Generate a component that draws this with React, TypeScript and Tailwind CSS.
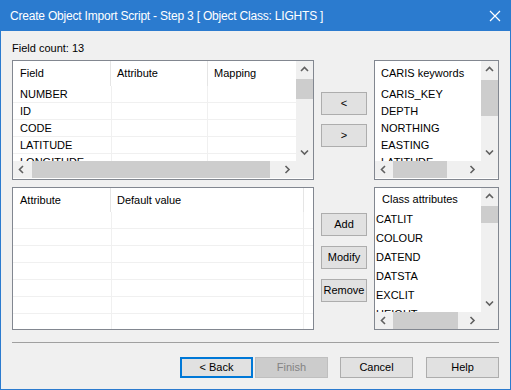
import { ReactNode } from 'react'

const font = { fontFamily: '"Liberation Sans", Arial, sans-serif' }

type Dir = 'up' | 'down' | 'left' | 'right'

const Chevron = ({ dir }: { dir: Dir }) => {
  const pts: Record<Dir, string> = {
    up: '1,5 4.5,1.5 8,5',
    down: '1,1.5 4.5,5 8,1.5',
    left: '5,1 1.5,4.5 5,8',
    right: '1.5,1 5,4.5 1.5,8',
  }
  const vertical = dir === 'up' || dir === 'down'
  return (
    <svg
      width={vertical ? 9 : 7}
      height={vertical ? 7 : 9}
      viewBox={vertical ? '0 0 9 7' : '0 0 7 9'}
    >
      <polyline points={pts[dir]} fill="none" stroke="#606060" strokeWidth="1.6" />
    </svg>
  )
}

const VScroll = ({ thumbTop, thumbH }: { thumbTop: number; thumbH: number }) => (
  <div className="flex w-[17px] shrink-0 flex-col bg-[#f0f0f0]">
    <div className="flex h-[17px] items-center justify-center">
      <Chevron dir="up" />
    </div>
    <div className="flex-1">
      <div className="bg-[#cdcdcd]" style={{ marginTop: thumbTop, height: thumbH }} />
    </div>
    <div className="flex h-[17px] items-center justify-center">
      <Chevron dir="down" />
    </div>
  </div>
)

const HScroll = ({ thumbLeft, thumbW }: { thumbLeft: number; thumbW: number }) => (
  <div className="flex h-[17px] shrink-0">
    <div className="flex flex-1 bg-[#f0f0f0]">
      <div className="flex w-[17px] items-center justify-center">
        <Chevron dir="left" />
      </div>
      <div className="flex-1">
        <div className="h-full bg-[#cdcdcd]" style={{ marginLeft: thumbLeft, width: thumbW }} />
      </div>
      <div className="flex w-[17px] items-center justify-center">
        <Chevron dir="right" />
      </div>
    </div>
    <div className="w-[17px] bg-[#f0f0f0]" />
  </div>
)

const SideButton = ({ children }: { children: ReactNode }) => (
  <button className="flex h-[23px] w-[46px] items-center justify-center border border-[#adadad] bg-[#e1e1e1] text-[11px] text-black">
    {children}
  </button>
)

const fields = ['NUMBER', 'ID', 'CODE', 'LATITUDE', 'LONGITUDE']
const keywords = ['CARIS_KEY', 'DEPTH', 'NORTHING', 'EASTING', 'LATITUDE']
const classAttrs = ['CATLIT', 'COLOUR', 'DATEND', 'DATSTA', 'EXCLIT', 'HEIGHT']

const FieldList = () => (
  <div className="flex h-[120px] w-[302px] flex-col border border-[#828790] bg-white">
    <div className="flex h-[100px]">
      <div className="flex-1 overflow-hidden">
        <div className="flex h-[25px] items-center">
          <div className="flex h-full w-[98px] items-center border-r border-[#e5e5e5] pl-[7px]">Field</div>
          <div className="flex h-full w-[97px] items-center border-r border-[#e5e5e5] pl-[6px]">Attribute</div>
          <div className="flex h-full flex-1 items-center pl-[6px]">Mapping</div>
        </div>
        {fields.map((f) => (
          <div key={f} className="flex h-[17px] border-b border-[#f0f0f0]">
            <div className="flex w-[98px] items-center pl-[7px]">{f}</div>
            <div className="w-[97px] border-x border-[#f0f0f0]" />
            <div className="flex-1" />
          </div>
        ))}
      </div>
      <VScroll thumbTop={1} thumbH={20} />
    </div>
    <HScroll thumbLeft={2} thumbW={238} />
  </div>
)

const DefaultsList = () => (
  <div className="flex h-[143px] w-[302px] flex-col overflow-hidden border border-[#828790] bg-white">
    <div className="flex h-[24px] shrink-0">
      <div className="flex h-full w-[98px] items-center border-r border-[#e5e5e5] pl-[7px]">Attribute</div>
      <div className="flex h-full w-[193px] items-center border-r border-[#e5e5e5] pl-[6px]">Default value</div>
    </div>
    {[0, 1, 2, 3, 4, 5, 6].map((i) => (
      <div key={i} className="flex h-[17px] shrink-0 border-b border-[#f0f0f0]">
        <div className="w-[98px]" />
        <div className="w-[193px] border-x border-[#f0f0f0]" />
      </div>
    ))}
  </div>
)

const KeywordList = () => (
  <div className="flex h-[120px] w-[125px] flex-col border border-[#828790] bg-white">
    <div className="flex h-[100px]">
      <div className="flex-1 overflow-hidden">
        <div className="flex h-[25px] items-center pl-[6px]">CARIS keywords</div>
        {keywords.map((k) => (
          <div key={k} className="flex h-[17px] items-center pl-[6px]">
            {k}
          </div>
        ))}
      </div>
      <VScroll thumbTop={2} thumbH={36} />
    </div>
    <HScroll thumbLeft={1} thumbW={54} />
  </div>
)

const ClassList = () => (
  <div className="flex h-[143px] w-[125px] flex-col border border-[#828790] bg-white">
    <div className="flex min-h-0 flex-1">
      <div className="flex-1 overflow-hidden">
        <div className="flex h-[22px] items-center pl-[7px]">Class attributes</div>
        {classAttrs.map((c) => (
          <div key={c} className="flex h-[19px] items-center pl-[1px]">
            {c}
          </div>
        ))}
      </div>
      <VScroll thumbTop={1} thumbH={17} />
    </div>
    <HScroll thumbLeft={1} thumbW={65} />
  </div>
)

export default function App() {
  return (
    <div
      className="flex h-[390px] w-[511px] flex-col border border-[#2b7bcf] bg-[#f0f0f0] text-[11px] text-black"
      style={font}
    >
      <div className="flex h-[30px] shrink-0 items-center justify-between bg-[#2b7bcf] pl-[9px] pr-[9px] text-[12px] text-white">
        <span className="tracking-[-0.2px]">Create Object Import Script - Step 3 [ Object Class: LIGHTS ]</span>
        <svg width="12" height="12" viewBox="0 0 12 12">
          <path d="M1 1 L11 11 M11 1 L1 11" stroke="white" strokeWidth="1.2" />
        </svg>
      </div>
      <div className="flex flex-1 flex-col px-[11px] pt-[11px]">
        <div className="h-[13px] leading-[13px]">Field count: 13</div>
        <div className="mt-[5px] flex gap-[7px]">
          <FieldList />
          <div className="flex flex-col gap-[9px] pt-[32px]">
            <SideButton>&lt;</SideButton>
            <SideButton>&gt;</SideButton>
          </div>
          <KeywordList />
        </div>
        <div className="mt-[7px] flex gap-[7px]">
          <DefaultsList />
          <div className="flex flex-col gap-[10px] pt-[26px]">
            <SideButton>Add</SideButton>
            <SideButton>Modify</SideButton>
            <SideButton>Remove</SideButton>
          </div>
          <ClassList />
        </div>
        <div className="mt-[12px] h-px bg-[#a0a0a0]" />
        <div className="mt-[14px] flex justify-end gap-[2px]">
          <button className="flex h-[21px] w-[73px] items-center justify-center border-2 border-[#0078d7] bg-[#e1e1e1]">
            &lt; Back
          </button>
          <button className="flex h-[21px] w-[73px] items-center justify-center border border-[#bfbfbf] bg-[#cccccc] text-[#838383]">
            Finish
          </button>
          <button className="ml-[10px] flex h-[21px] w-[73px] items-center justify-center border border-[#adadad] bg-[#e1e1e1]">
            Cancel
          </button>
          <button className="ml-[11px] flex h-[21px] w-[73px] items-center justify-center border border-[#adadad] bg-[#e1e1e1]">
            Help
          </button>
        </div>
      </div>
    </div>
  )
}
